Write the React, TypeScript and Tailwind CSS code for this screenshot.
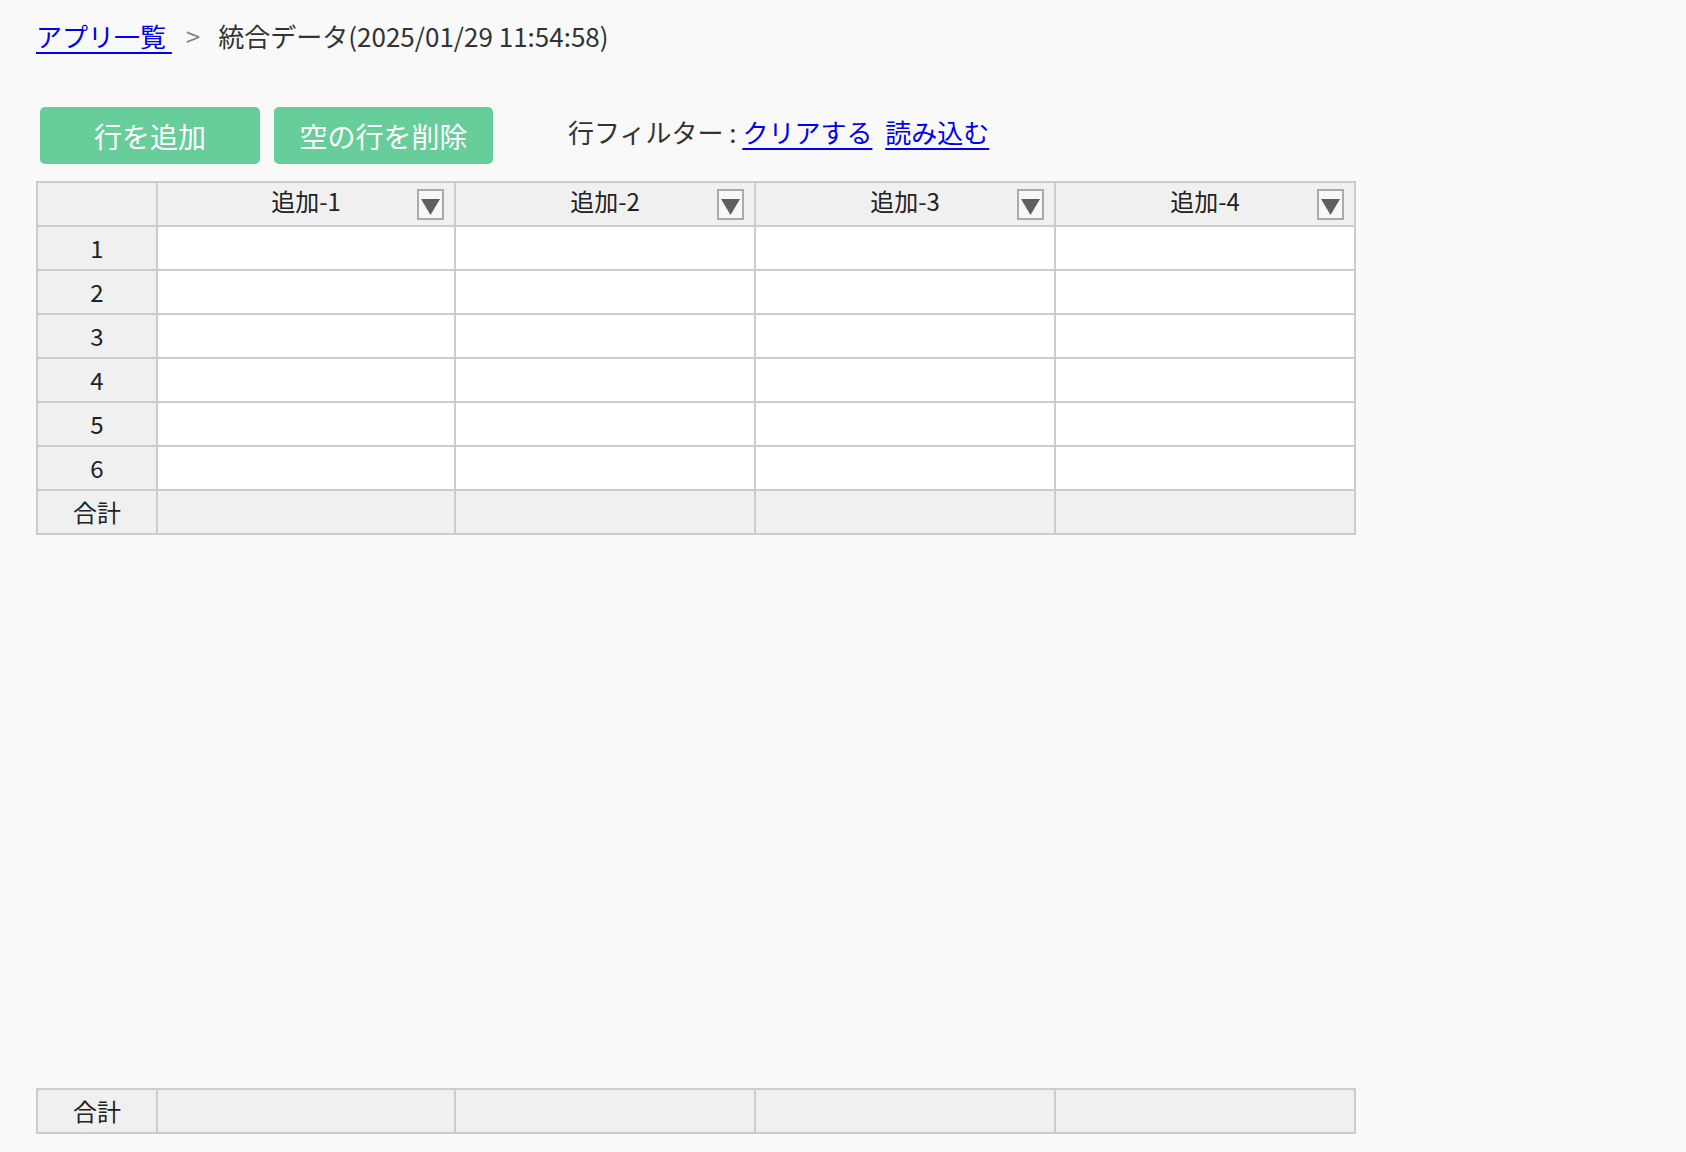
import React from 'react';

const columns = ['追加-1', '追加-2', '追加-3', '追加-4'];
const colWidths = ['w-[298px]', 'w-[300px]', 'w-[300px]', 'w-[300px]'];
const rows = [1, 2, 3, 4, 5, 6];

const FilterBox = () => (
  <span className="flex-none w-[27px] h-[31px] border-2 border-[#aaaaaa] bg-[#f7f7f7] flex items-start justify-center pt-[8px]">
    <svg width="19" height="16" viewBox="0 0 19 16">
      <polygon points="0,0 19,0 9.5,16" fill="#5f5f5f" />
    </svg>
  </span>
);

const Colgroup = () => (
  <colgroup>
    <col className="w-[120px]" />
    {colWidths.map((w, i) => (
      <col key={i} className={w} />
    ))}
  </colgroup>
);

export default function App() {
  return (
    <div className="h-screen flex flex-col bg-[#f9f9f9] text-[#333] font-['Noto_Sans_CJK_JP','Noto_Sans',sans-serif]">
      <div className="pl-[36px] pt-[16px] text-[26px] leading-[40px] flex items-center">
        <a href="#" className="text-[#0000ee] underline underline-offset-[5px]">アプリ一覧{'\u00a0'}</a>
        <span className="text-[#888] ml-[14px] mr-[18px]">&gt;</span>
        <span>統合データ(2025/01/29 11:54:58)</span>
      </div>

      <div className="flex items-center pl-[40px] mt-[51px]">
        <button className="w-[220px] h-[57px] rounded-[5px] bg-[#67cd9a] text-white text-[28px]">行を追加</button>
        <button className="w-[219px] h-[57px] rounded-[5px] bg-[#67cd9a] text-white text-[28px] ml-[14px]">空の行を削除</button>
        <div className="ml-[75px] text-[26px] leading-[40px] -mt-[7px]">
          行フィルター :{' '}
          <a href="#" className="text-[#0000ee] underline underline-offset-[5px]">クリアする</a>{' '}
          <a href="#" className="text-[#0000ee] underline underline-offset-[5px] ml-[7px]">読み込む</a>
        </div>
      </div>

      <div className="flex-1 pl-[36px] pt-[17px]">
        <table className="table-fixed w-[1318px] border-collapse text-[24px] text-[#222]">
          <Colgroup />
          <thead>
            <tr className="h-[44px] bg-[#f0f0f0]">
              <th className="border-2 border-[#cccccc]"></th>
              {columns.map(c => (
                <th key={c} className="border-2 border-[#cccccc] font-normal p-0">
                  <div className="flex items-center pr-[10px]">
                    <span className="flex-1 text-center pl-[37px] -mt-[7px]">{c}</span>
                    <FilterBox />
                  </div>
                </th>
              ))}
            </tr>
          </thead>
          <tbody>
            {rows.map(r => (
              <tr key={r} className="h-[44px]">
                <td className="border-2 border-[#cccccc] bg-[#f0f0f0] text-center">{r}</td>
                {columns.map(c => (
                  <td key={c} className="border-2 border-[#cccccc] bg-white"></td>
                ))}
              </tr>
            ))}
            <tr className="h-[44px] bg-[#f0f0f0]">
              <td className="border-2 border-[#cccccc] text-center">合計</td>
              {columns.map(c => (
                <td key={c} className="border-2 border-[#cccccc]"></td>
              ))}
            </tr>
          </tbody>
        </table>
      </div>

      <div className="pl-[36px] pb-[18px]">
        <table className="table-fixed w-[1318px] border-collapse text-[24px] text-[#222]">
          <Colgroup />
          <tbody>
            <tr className="h-[44px] bg-[#f0f0f0]">
              <td className="border-2 border-[#cccccc] text-center">合計</td>
              {columns.map(c => (
                <td key={c} className="border-2 border-[#cccccc]"></td>
              ))}
            </tr>
          </tbody>
        </table>
      </div>
    </div>
  );
}
